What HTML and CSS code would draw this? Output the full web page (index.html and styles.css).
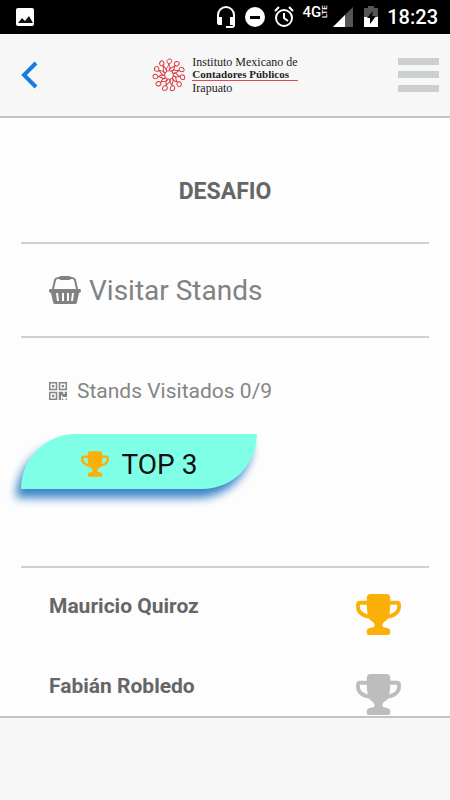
FILE: index.html
```
<!DOCTYPE html>
<html lang="es">
<head>
    <meta charset="UTF-8">
    <meta name="viewport" content="width=device-width, initial-scale=1.0">
    <title>Desafio</title>
    <link rel="stylesheet" href="styles.css">
</head>
<body>
    <svg class="symbols" aria-hidden="true">
        <symbol id="trophy" viewBox="0 0 46 42">
            <path fill="currentColor" fill-rule="evenodd" d="M15 0h16q4 0 4 4v3h7q4 0 4 4v2c0 7-6 11-13 12-3 3-6 4-6 7 0 4 8 1 8 6v2q0 2-2 2H13q-2 0-2-2v-2c0-5 8-2 8-6 0-3-3-4-6-7C6 24 0 20 0 13v-2q0-4 4-4h7V4q0-4 4-4zM11 11H4v2c0 4 3 6 8 8q-1-4-1-10zm24 0q0 6-1 10c5-2 8-4 8-8v-2z"/>
        </symbol>
        <symbol id="person" viewBox="0 0 36 36">
            <path fill="none" stroke="#d8343c" d="M19 1c-4 0-4 5-1 5s4-5 1-5zM18 6c0 3-4 5-3 7 2 2 4 0 4-2 0-3-1-3-1-5"/>
        </symbol>
    </svg>

    <div class="status-bar">
        <svg class="status-photo" width="18" height="18" viewBox="0 0 18 18">
            <path fill="#fff" d="M2 0h14q2 0 2 2v14q0 2-2 2H2q-2 0-2-2V2q0-2 2-2z"/>
            <path fill="#111" d="M2 15l4-5 3 3 4-5 4 7z"/>
        </svg>
        <svg width="20" height="22" viewBox="0 0 20 22">
            <path fill="none" stroke="#fff" stroke-width="2" d="M2 12V9a8 8 0 0 1 16 0v10q0 2-2 2h-6"/>
            <path fill="#fff" d="M1 11h5v8H3q-2 0-2-2zm13 0h5v8h-5z"/>
        </svg>
        <svg width="20" height="22" viewBox="0 0 20 22">
            <circle cx="10" cy="11" r="10" fill="#fff"/>
            <path fill="#000" d="M5 10h10v3H5z"/>
        </svg>
        <svg width="20" height="22" viewBox="0 0 20 22">
            <g fill="none" stroke="#fff" stroke-width="2">
                <circle cx="10" cy="12" r="8"/>
                <path d="M10 7v5l4 3M1 5l4-4M19 5l-4-4"/>
            </g>
        </svg>
        <div class="signal">
            <span class="network">4G<small>LTE</small></span>
            <svg width="20" height="20" viewBox="0 0 20 20">
                <path fill="#555" d="M20 0v20H0z"/>
                <path fill="#fff" d="M12 8v12H0z"/>
            </svg>
        </div>
        <svg class="battery" width="14" height="22" viewBox="0 0 14 22">
            <path fill="#555" d="M4 0h6v2h4v9H0V2h4z"/>
            <path fill="#fff" d="M0 11h14v10H0z"/>
            <path fill="#000" d="M9 5l-6 7h3v6l6-8H8z"/>
        </svg>
        <time>18:23</time>
    </div>

    <header class="toolbar">
        <button class="icon-button" type="button" aria-label="Regresar">
            <svg width="18" height="28" viewBox="0 0 18 28">
                <path fill="none" stroke="#1c7be0" stroke-width="4" d="M16 2L4 14l12 12"/>
            </svg>
        </button>
        <div class="logo">
            <svg width="34" height="36" viewBox="0 0 36 36">
                <use href="#person"/>
                <use href="#person" transform="rotate(33 18 18)"/>
                <use href="#person" transform="rotate(65 18 18)"/>
                <use href="#person" transform="rotate(98 18 18)"/>
                <use href="#person" transform="rotate(131 18 18)"/>
                <use href="#person" transform="rotate(164 18 18)"/>
                <use href="#person" transform="rotate(196 18 18)"/>
                <use href="#person" transform="rotate(229 18 18)"/>
                <use href="#person" transform="rotate(262 18 18)"/>
                <use href="#person" transform="rotate(295 18 18)"/>
                <use href="#person" transform="rotate(327 18 18)"/>
            </svg>
            <div class="logo-text">
                <span>Instituto Mexicano de</span>
                <strong>Contadores Públicos</strong>
                <span>Irapuato</span>
            </div>
        </div>
        <button class="icon-button" type="button" aria-label="Menú">
            <svg width="42" height="36" viewBox="0 0 42 36">
                <path fill="#cbcfcf" d="M0 1h41v7H0zM0 14h41v7H0zM0 28h41v7H0z"/>
            </svg>
        </button>
    </header>

    <main class="content">
        <h1>DESAFIO</h1>
        <a class="visit" href="#stands">
            <svg width="32" height="30" viewBox="0 0 32 30">
                <path fill="none" stroke="currentColor" stroke-width="2" d="M4 14L6 5q1-2 3-2h14q2 0 3 2l2 9"/>
                <path fill="currentColor" d="M12 1h8q2 0 2 2t-2 2h-8q-2 0-2-2t2-2z"/>
                <path fill="currentColor" fill-rule="evenodd" d="M1 14h30q1 0 1 2t-2 2l-2 9q0 2-2 2H6q-2 0-2-2l-2-9q-2 0-2-2t1-2zM7 18l1 8h2l-1-8zm6 0v8h2v-8zm5 0v8h2v-8zm5 0l-1 8h2l1-8z"/>
            </svg>
            Visitar Stands
        </a>
        <section class="progress" id="stands">
            <p>
                <svg width="18" height="18" viewBox="0 0 24 24">
                    <path fill="none" stroke="currentColor" stroke-width="2" d="M1 1h9v9H1zM14 1h9v9h-9zM1 14h9v9H1z"/>
                    <path fill="currentColor" d="M4 4h3v3H4zM17 4h3v3h-3zM4 17h3v3H4zM13 13h6v3h2v-3h3v7h-6v-2h-2v6h-3zM17 22h2v2h-2zM22 22h2v2h-2z"/>
                </svg>
                Stands Visitados 0/9
            </p>
            <h2 class="top">
                <svg width="28" height="26"><use href="#trophy"/></svg>
                TOP 3
            </h2>
        </section>
        <ol class="ranking">
            <li>Mauricio Quiroz <svg class="gold" width="45" height="41"><use href="#trophy"/></svg></li>
            <li>Fabián Robledo <svg class="silver" width="45" height="41"><use href="#trophy"/></svg></li>
        </ol>
    </main>

    <footer class="tab-bar"></footer>
</body>
</html>
```

FILE: styles.css
```
* {
    box-sizing: border-box;
}
body {
    display: flex;
    flex-direction: column;
    height: 100vh;
    margin: 0;
    font-family: Roboto, sans-serif;
    background-color: #fdfdfd;
    color: #666;
}
svg {
    flex-shrink: 0;
}
.symbols {
    position: absolute;
    width: 0;
    height: 0;
}

.status-bar {
    display: flex;
    align-items: center;
    gap: 9px;
    flex-shrink: 0;
    height: 34px;
    padding: 0 12px 0 16px;
    background: #000;
    color: #fff;
    font-size: 20px;
    font-weight: 500;
}
.status-photo {
    margin-right: auto;
}
.signal {
    display: flex;
    align-items: center;
    align-self: stretch;
    gap: 4px;
}
.network {
    display: flex;
    align-self: flex-start;
    padding-top: 4px;
    font-size: 15px;
    line-height: 16px;
}
.network small {
    writing-mode: vertical-rl;
    transform: rotate(180deg);
    font-size: 8px;
    line-height: 8px;
    text-align: center;
}
.battery {
    margin-left: 2px;
}

.toolbar {
    display: flex;
    align-items: center;
    justify-content: space-between;
    flex-shrink: 0;
    height: 84px;
    padding: 0 10px 0 20px;
    background: #f7f7f7;
    border-bottom: 2px solid #c4c4c4;
}
.icon-button {
    display: flex;
    padding: 0;
    border: 0;
    background: none;
    cursor: pointer;
}
.logo {
    display: flex;
    align-items: center;
    gap: 6px;
    margin-left: 14px;
}
.logo-text {
    display: flex;
    flex-direction: column;
    font-family: "Liberation Serif", serif;
    font-size: 12px;
    line-height: 12px;
    color: #222;
}
.logo-text strong {
    margin-bottom: 1px;
    border-bottom: 1px solid #e04a4a;
    font-size: 11px;
}

.content {
    flex: 1;
    min-height: 0;
    padding: 0 21px;
    overflow: hidden;
}
h1 {
    margin: 0;
    padding: 59px 0 35px;
    border-bottom: 2px solid #d0d0d0;
    font-size: 23px;
    line-height: 30px;
    text-align: center;
}
.visit {
    display: flex;
    align-items: center;
    gap: 8px;
    height: 94px;
    padding-left: 28px;
    border-bottom: 2px solid #d0d0d0;
    color: #808284;
    font-size: 28px;
    text-decoration: none;
}
.progress {
    padding: 38px 0 77px;
    border-bottom: 2px solid #d0d0d0;
}
.progress p {
    display: flex;
    align-items: center;
    gap: 10px;
    margin: 0 0 28px;
    padding-left: 28px;
    color: #858585;
    font-size: 21px;
    line-height: 30px;
}
.top {
    display: flex;
    align-items: center;
    justify-content: center;
    gap: 13px;
    width: 236px;
    height: 55px;
    margin: 0;
    padding-top: 5px;
    border-radius: 56px 0;
    background: #7fffe6;
    box-shadow: -5px 9px 10px #3d84c8;
    color: #111;
    font-size: 28px;
    font-weight: 400;
}
.top svg,
.gold {
    color: #fbb009;
}
.silver {
    color: #bdbdbd;
}

.ranking {
    margin: 0;
    padding: 26px 28px 0;
    list-style: none;
    font-size: 21px;
    font-weight: bold;
    line-height: 24px;
}
.ranking li {
    display: flex;
    justify-content: space-between;
    height: 80px;
}

.tab-bar {
    flex-shrink: 0;
    height: 84px;
    background: #f7f7f7;
    border-top: 2px solid #c4c4c4;
}
```
